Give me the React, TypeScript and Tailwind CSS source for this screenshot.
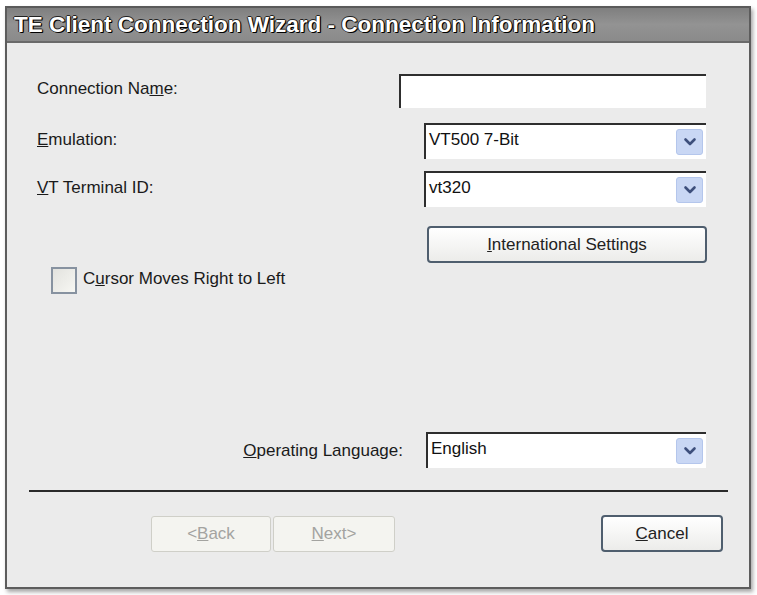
import React from 'react'

const font = { fontFamily: '"Liberation Sans", Arial, sans-serif' }

function Chevron() {
  return (
    <svg width="14" height="10" viewBox="0 0 14 10">
      <path d="M2.5 2.5 L7 7 L11.5 2.5" fill="none" stroke="#3d4f7c" strokeWidth="2.6" strokeLinecap="round" strokeLinejoin="round" />
    </svg>
  )
}

function Select({ value, width }: { value: string; width: string }) {
  return (
    <div className={`${width} h-[36px] flex items-center justify-between bg-white border-t-2 border-l-2 border-[#2e2e2e] pl-[3px] pr-[3px]`}>
      <span className="text-[17px] text-[#111] leading-none -mt-[6px]">{value}</span>
      <div className="w-[27px] h-[26px] rounded-[3px] bg-[#c9d7f4] border border-[#b4c6ec] flex items-center justify-center">
        <Chevron />
      </div>
    </div>
  )
}

export default function App() {
  return (
    <div className="w-[757px] h-[595px] bg-white pt-[6px] pl-[5px] text-[#1a1a1a]" style={font}>
      <div className="w-[746px] h-[583px] flex flex-col border-2 border-t-0 border-[#5c5c5c] shadow-[2px_3px_4px_rgba(0,0,0,0.35)]">
        {/* title bar */}
        <div className="h-[37px] flex items-center pl-[7px] bg-gradient-to-b from-[#7f7f7f] via-[#939393] to-[#8a8a8a] border-t-2 border-[#5a5a5a] border-b-2 border-b-[#6a6a6a]">
          <span className="text-[22.5px] font-bold text-white [text-shadow:1px_1px_0_#000,-1px_0_0_#222,0_-1px_0_#222,1px_0_1px_#000]">
            TE Client Connection Wizard - Connection Information
          </span>
        </div>

        {/* body */}
        <div className="flex-1 flex flex-col bg-[#ebebeb]">
          <div className="mt-[31px] pl-[30px] pr-[43px] flex items-center justify-between">
            <span className="text-[17px] -mt-[4px]">
              Connection Na<u>m</u>e:
            </span>
            <div className="w-[307px] h-[34px] bg-white border-t-2 border-l-2 border-[#2e2e2e]" />
          </div>

          <div className="mt-[15px] pl-[30px] pr-[43px] flex items-center justify-between">
            <span className="text-[17px] -mt-[2px]">
              <u>E</u>mulation:
            </span>
            <Select value="VT500 7-Bit" width="w-[282px]" />
          </div>

          <div className="mt-[12px] pl-[30px] pr-[43px] flex items-center justify-between">
            <span className="text-[17px] -mt-[2px]">
              <u>V</u>T Terminal ID:
            </span>
            <Select value="vt320" width="w-[282px]" />
          </div>

          <div className="mt-[19px] pr-[42px] flex justify-end">
            <button className="w-[280px] h-[37px] rounded-[4px] border-2 border-[#4f5e6e] bg-gradient-to-b from-white to-[#ececea] text-[17px] text-[#222]">
              <u>I</u>nternational Settings
            </button>
          </div>

          <div className="mt-[4px] pl-[44px] flex items-center gap-[6px]">
            <div className="w-[26px] h-[27px] border-2 border-[#8792a0] bg-gradient-to-br from-[#e2e2de] to-[#f7f7f3]" />
            <span className="text-[17px] -mt-[3px]">
              C<u>u</u>rsor Moves Right to Left
            </span>
          </div>

          <div className="mt-[138px] pr-[43px] flex items-center justify-end gap-[23px]">
            <span className="text-[17px] mt-[1px]">
              <u>O</u>perating Language:
            </span>
            <Select value="English" width="w-[280px]" />
          </div>

          <div className="mt-[22px] ml-[22px] mr-[21px] h-[2px] bg-[#2a2a2a]" />

          <div className="mt-[23px] flex items-center pl-[144px] pr-[26px]">
            <div className="flex gap-[2px]">
              <button className="w-[120px] h-[36px] rounded-[3px] border border-[#cfcfc8] bg-[#f4f4f0] text-[17px] text-[#a3a3a0]">
                &lt;<u>B</u>ack
              </button>
              <button className="w-[122px] h-[36px] rounded-[3px] border border-[#cfcfc8] bg-[#f4f4f0] text-[17px] text-[#a3a3a0]">
                <u>N</u>ext&gt;
              </button>
            </div>
            <div className="flex-1" />
            <button className="w-[122px] h-[37px] rounded-[4px] border-2 border-[#4f5e6e] bg-gradient-to-b from-white to-[#ececea] text-[17px] text-[#222]">
              <u>C</u>ancel
            </button>
          </div>
        </div>
      </div>
    </div>
  )
}
